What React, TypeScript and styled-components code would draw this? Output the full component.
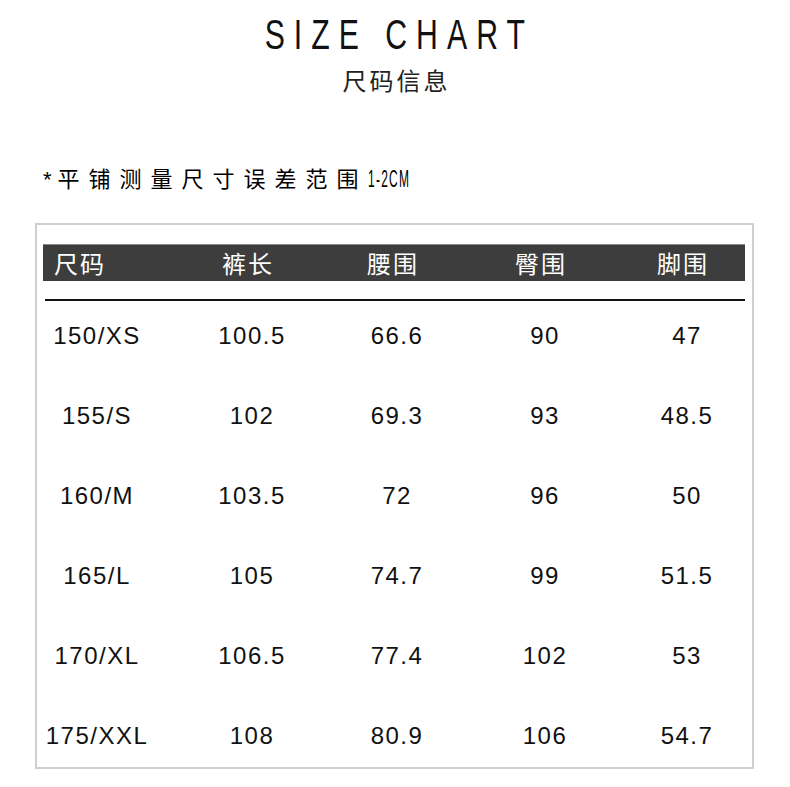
import {createGlobalStyle, styled} from "styled-components";

const GlobalStyle = createGlobalStyle`
    html, body {
        margin: 0;
        padding: 0;
        background: #ffffff;
    }

    body {
        font-family: "Liberation Sans", Arial, sans-serif;
        color: #111;
    }
`;

const headers = ["尺码", "裤长", "腰围", "臀围", "脚围"];

const rows: string[][] = [
    ["150/XS", "100.5", "66.6", "90", "47"],
    ["155/S", "102", "69.3", "93", "48.5"],
    ["160/M", "103.5", "72", "96", "50"],
    ["165/L", "105", "74.7", "99", "51.5"],
    ["170/XL", "106.5", "77.4", "102", "53"],
    ["175/XXL", "108", "80.9", "106", "54.7"],
];

const App = () => {
    return (
        <>
            <GlobalStyle/>
            <Page>
                <TitleRow>
                    <Title>SIZE CHART</Title>
                </TitleRow>
                <Subtitle>尺码信息</Subtitle>

                <Note>
                    <NoteStar>*</NoteStar>平铺测量尺寸误差范围<NoteLatin>1-2CM</NoteLatin>
                </Note>

                <ChartBox>
                    <HeaderBar>
                        {headers.map((h, i) => (
                            <HeaderCell key={h} $first={i === 0}>{h}</HeaderCell>
                        ))}
                    </HeaderBar>

                    <Divider/>

                    <Body>
                        {rows.map((row) => (
                            <Row key={row[0]}>
                                {row.map((cell, i) => (
                                    <Cell key={i}>{cell}</Cell>
                                ))}
                            </Row>
                        ))}
                    </Body>
                </ChartBox>
            </Page>
        </>
    );
};

export default App;

const columns = "108px 202px 88px 208px 76px";

const Page = styled.div`
    width: 790px;
    height: 787px;
    padding-top: 14px;
    box-sizing: border-box;
    display: flex;
    flex-direction: column;
`;

const TitleRow = styled.div`
    display: flex;
    justify-content: center;
    height: 42px;
`;

const Title = styled.h1`
    margin: 0;
    font-family: "Liberation Sans", Arial, sans-serif;
    font-weight: 400;
    font-size: 42px;
    line-height: 42px;
    letter-spacing: 12.5px;
    white-space: nowrap;
    transform: scaleX(0.72);
    padding-left: 12px;
    color: #111;
`;

const Subtitle = styled.div`
    margin-top: 12px;
    text-align: center;
    font-family: "Noto Sans CJK SC", sans-serif;
    font-size: 24px;
    line-height: 24px;
    letter-spacing: 3px;
    padding-left: 3px;
    color: #222;
`;

const Note = styled.div`
    margin-top: 72px;
    padding-left: 43px;
    height: 26px;
    white-space: nowrap;
    font-family: "Noto Sans CJK SC", sans-serif;
    font-size: 22px;
    line-height: 26px;
    letter-spacing: 9px;
    color: #000;
`;

const NoteStar = styled.span`
    font-family: "Liberation Sans", Arial, sans-serif;
    font-size: 22px;
    letter-spacing: 1px;
    margin-right: 5px;
`;

const NoteLatin = styled.span`
    display: inline-block;
    margin-left: 0;
    font-family: "Liberation Sans", Arial, sans-serif;
    font-size: 24px;
    letter-spacing: 2.5px;
    transform: scaleX(0.5);
    transform-origin: left center;
`;

const ChartBox = styled.div`
    margin: 33px 0 0 35px;
    width: 719px;
    border: 2px solid #cfcfcf;
    box-sizing: border-box;
    padding: 19px 7px 0 6px;
`;

const HeaderBar = styled.div`
    display: grid;
    grid-template-columns: ${columns};
    align-items: center;
    height: 37px;
    background-color: #3d3d3d;
    border-top: 1px solid #8a8a8a;
    box-sizing: border-box;
`;

const HeaderCell = styled.div<{ $first?: boolean }>`
    justify-self: ${(p) => (p.$first ? "start" : "center")};
    padding-left: ${(p) => (p.$first ? "11px" : "0")};
    margin-left: ${(p) => (p.$first ? "0" : "-8px")};
    font-family: "Noto Sans CJK SC", sans-serif;
    font-size: 24px;
    line-height: 24px;
    letter-spacing: 2px;
    color: #ffffff;
`;

const Divider = styled.div`
    margin: 18px 0 0 2px;
    height: 2px;
    background-color: #111;
`;

const Body = styled.div`
    display: flex;
    flex-direction: column;
    gap: 56px;
    padding: 23px 0 19px;
`;

const Row = styled.div`
    display: grid;
    grid-template-columns: ${columns};
    height: 24px;
    align-items: center;
`;

const Cell = styled.div`
    justify-self: center;
    white-space: nowrap;
    font-family: "Liberation Sans", Arial, sans-serif;
    font-size: 24px;
    line-height: 24px;
    letter-spacing: 1.5px;
    color: #111;
`;
